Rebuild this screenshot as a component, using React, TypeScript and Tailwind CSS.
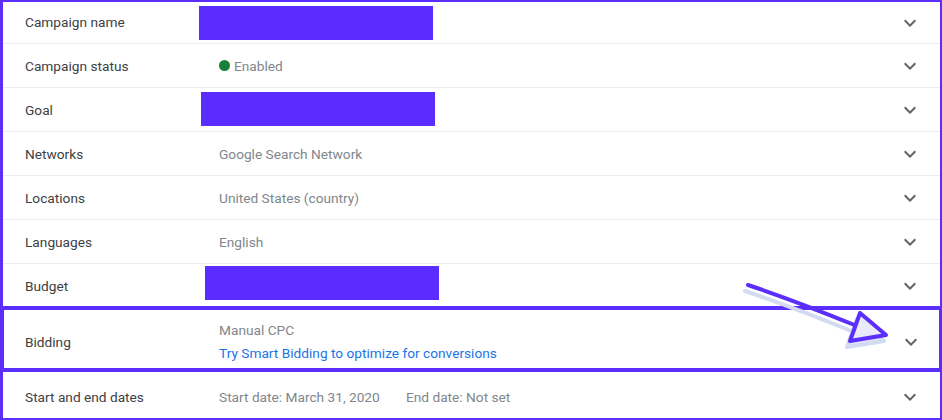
import React from "react";

const PURPLE = "#5b2efc";

const Chevron = () => (
  <svg width="24" height="24" viewBox="0 0 24 24" className="shrink-0 text-[#5f6368]">
    <path fill="currentColor" d="M16.59 8.59L12 13.17 7.41 8.59 6 10l6 6 6-6z" />
  </svg>
);

const Redacted = ({ offset }: { offset: string }) => (
  <div className={`h-[34px] w-[234px] bg-[#5a2dfe] ${offset}`} />
);

const Row = ({
  label,
  children,
  first,
}: {
  label: string;
  children?: React.ReactNode;
  first?: boolean;
}) => (
  <div
    className={`flex items-center border-b border-[#ebebeb] pl-[22px] pr-[18px] ${
      first ? "h-[42px]" : "h-[44px] pt-[1px]"
    }`}
  >
    <div className="w-[194px] shrink-0 text-[#3c4043]">{label}</div>
    <div className="flex flex-1 items-center text-[#80868b]">{children}</div>
    <Chevron />
  </div>
);

export default function App() {
  return (
    <div
      className="relative h-[420px] w-[942px] overflow-hidden bg-white text-[13.7px]"
      style={{ fontFamily: "Roboto, 'Liberation Sans', sans-serif" }}
    >
      <div className="flex h-full flex-col border-2 border-[#5b2efc] border-l-[3px] border-r-[2px]">
        <Row label="Campaign name" first>
          <Redacted offset="-ml-[20px] mt-[1px]" />
        </Row>
        <Row label="Campaign status">
          <span className="mr-[4px] h-[11px] w-[11px] rounded-full bg-[#188038]" />
          Enabled
        </Row>
        <Row label="Goal">
          <Redacted offset="-ml-[18px] -translate-y-[1px]" />
        </Row>
        <Row label="Networks">Google Search Network</Row>
        <Row label="Locations">United States (country)</Row>
        <Row label="Languages">English</Row>
        <Row label="Budget">
          <Redacted offset="-ml-[14px] -translate-y-[3px]" />
        </Row>

        <div className="-mx-[3px] -mt-[2px] flex h-[66px] shrink-0 items-center border-4 border-[#5b2efc] pl-[21px] pr-[16px] pt-[6px]">
          <div className="w-[194px] shrink-0 text-[#3c4043]">Bidding</div>
          <div className="flex flex-1 flex-col leading-[23px]">
            <span className="text-[#80868b]">Manual CPC</span>
            <span className="text-[#1a73e8]">Try Smart Bidding to optimize for conversions</span>
          </div>
          <Chevron />
        </div>

        <div className="flex flex-1 items-center pl-[22px] pr-[18px] pt-[4px]">
          <div className="w-[194px] shrink-0 text-[#3c4043]">Start and end dates</div>
          <div className="flex flex-1 items-center text-[#80868b]">
            <span className="w-[187px]">Start date: March 31, 2020</span>
            <span>End date: Not set</span>
          </div>
          <Chevron />
        </div>
      </div>

      <svg
        className="pointer-events-none absolute left-0 top-0"
        width="942"
        height="420"
        viewBox="0 0 942 420"
      >
        <g transform="translate(-3 5)" stroke="#d3dbf2" strokeWidth="4" fill="none" strokeLinecap="round" strokeLinejoin="round">
          <path d="M748 286 C790 300 830 316 857 327" />
          <path d="M860 314 L887 336 L850 342 Z" fill="#dfe4f6" />
        </g>
        <g stroke={PURPLE} strokeWidth="4" fill="none" strokeLinecap="round" strokeLinejoin="round">
          <path d="M748 285 C790 299 830 315 857 326" />
          <path d="M860 313 L886 335 L850 341 Z" fill="#e9ebfa" />
        </g>
      </svg>
    </div>
  );
}
